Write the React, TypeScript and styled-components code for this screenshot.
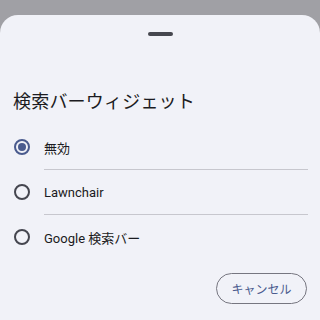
import React, { useState } from "react";
import styled, { createGlobalStyle } from "styled-components";

const GlobalStyle = createGlobalStyle`
  html, body {
    margin: 0;
    padding: 0;
    background: #a0a0a5;
    font-family: Roboto, "Noto Sans CJK JP", sans-serif;
  }
  #root {
    height: 320px;
  }
`;

const Screen = styled.div`
  width: 320px;
  height: 320px;
  display: flex;
  flex-direction: column;
  padding-top: 15px;
  box-sizing: border-box;
  overflow: hidden;
`;

const Sheet = styled.div`
  flex: 1;
  background: #f1f2f8;
  border-radius: 18px 18px 0 0;
  display: flex;
  flex-direction: column;
`;

const Handle = styled.div`
  align-self: center;
  width: 25px;
  height: 4px;
  border-radius: 2px;
  background: #46474f;
  margin-top: 17px;
`;

const Title = styled.h2`
  margin: 54px 0 0 13px;
  font-size: 18px;
  line-height: 24px;
  font-weight: 400;
  color: #1b1b21;
  letter-spacing: 0.2px;
`;

const List = styled.div`
  margin-top: 11px;
  display: flex;
  flex-direction: column;
`;

const Row = styled.label`
  display: flex;
  align-items: center;
  height: 44px;
  padding-left: 14px;
  cursor: pointer;
`;

const Radio = styled.span<{ $checked: boolean }>`
  width: 16px;
  height: 16px;
  box-sizing: border-box;
  border-radius: 50%;
  border: 2px solid ${(p) => (p.$checked ? "#4a5b8e" : "#45464f")};
  display: flex;
  align-items: center;
  justify-content: center;
  flex-shrink: 0;
  &::after {
    content: "";
    width: 8px;
    height: 8px;
    border-radius: 50%;
    background: #4a5b8e;
    display: ${(p) => (p.$checked ? "block" : "none")};
  }
`;

const Label = styled.span`
  margin-left: 14px;
  font-size: 13px;
  color: #1b1b21;
`;

const Divider = styled.div`
  height: 1px;
  background: #c7c7ce;
  margin: 0 12px 0 44px;
`;

const Footer = styled.div`
  display: flex;
  justify-content: flex-end;
  padding: 14px 13px 0 0;
`;

const CancelButton = styled.button`
  width: 91px;
  height: 31px;
  border-radius: 16px;
  border: 1px solid #767680;
  background: transparent;
  color: #4a5b8e;
  font-family: Roboto, "Noto Sans CJK JP", sans-serif;
  font-size: 12px;
  font-weight: 400;
  cursor: pointer;
`;

const options = ["無効", "Lawnchair", "Google 検索バー"];

export default function App() {
  const [selected, setSelected] = useState(0);
  return (
    <>
      <GlobalStyle />
      <Screen>
        <Sheet>
          <Handle />
          <Title>検索バーウィジェット</Title>
          <List>
            {options.map((opt, i) => (
              <React.Fragment key={opt}>
                <Row onClick={() => setSelected(i)}>
                  <Radio $checked={selected === i} />
                  <Label>{opt}</Label>
                </Row>
                {i < options.length - 1 && <Divider />}
              </React.Fragment>
            ))}
          </List>
          <Footer>
            <CancelButton>キャンセル</CancelButton>
          </Footer>
        </Sheet>
      </Screen>
    </>
  );
}
